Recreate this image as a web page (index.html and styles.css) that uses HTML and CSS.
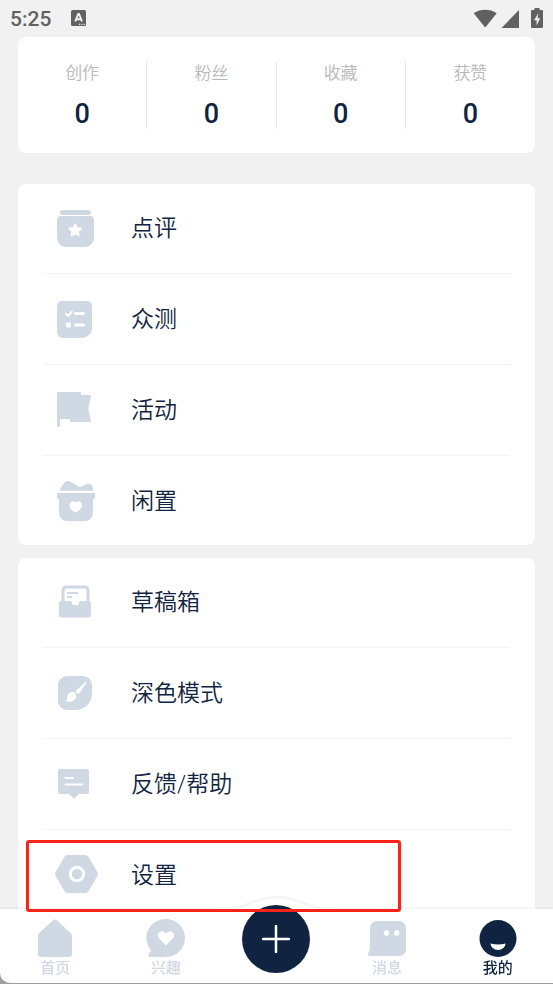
FILE: index.html
```html
<!DOCTYPE html>
<html lang="zh-CN">
<head>
<meta charset="utf-8">
<meta name="viewport" content="width=device-width, initial-scale=1">
<title>我的</title>
<link rel="stylesheet" href="styles.css">
</head>
<body>
<div class="app">
  <header class="status">
    <span class="time">5:25</span>
    <svg class="ime" width="16" height="17" viewBox="0 0 16 17" aria-hidden="true">
      <rect width="15" height="16" rx="1.5" fill="#616161"/>
      <path d="M4.200 11.500 7.200 4h.8l3 7.500M5.300 9.200h4.600" fill="none" stroke="#f1f1f1" stroke-width="1.900"/>
      <path d="M8 14.300h1.200M10.300 14.300h1.200M12.600 14.300h1.200" stroke="#f1f1f1" stroke-width="1.200"/>
    </svg>
    <svg class="signals" width="70" height="22" viewBox="0 0 70 22" fill="#616161" aria-hidden="true">
      <path d="M.7 5.200C7.500.600 16.900.600 23.700 5.200L12.700 19h-1z"/>
      <path d="M46 2V20H28.500z"/>
      <path d="M61.500 0h5v2H69a1 1 0 0 1 1 1v16a1 1 0 0 1-1 1H59a1 1 0 0 1-1-1V3a1 1 0 0 1 1-1h2.500z"/>
      <path d="M65.500 5 61 12.200h2.600V17.500L67.200 10.200h-2.700z" fill="#f1f1f1"/>
    </svg>
  </header>

  <main class="content">
    <section class="card stats">
      <a class="stat" href="#works"><span class="stat-label">创作</span><span class="stat-value">0</span></a>
      <a class="stat" href="#fans"><span class="stat-label">粉丝</span><span class="stat-value">0</span></a>
      <a class="stat" href="#saved"><span class="stat-label">收藏</span><span class="stat-value">0</span></a>
      <a class="stat" href="#likes"><span class="stat-label">获赞</span><span class="stat-value">0</span></a>
    </section>

    <ul class="card menu">
      <li><a href="#review">
        <svg class="icon" viewBox="0 0 47 47" aria-hidden="true">
          <rect x="8" y="5" width="31" height="5" rx="2.500"/>
          <path d="M9 11h29a4 4 0 0 1 4 4v18a9 9 0 0 1-9 9H14a9 9 0 0 1-9-9V15a4 4 0 0 1 4-4z"/>
          <path class="cut join" d="m23.200 19.400 1.700 3.700 4 .5-3 2.700.8 4-3.500-2-3.500 2 .8-4-3-2.700 4-.5z"/>
        </svg>点评</a></li>
      <li><a href="#trial">
        <svg class="icon" viewBox="0 0 47 47" aria-hidden="true">
          <path d="M10 5h25a5 5 0 0 1 5 5v22a10 10 0 0 1-10 10H11a6 6 0 0 1-6-6V10a5 5 0 0 1 5-5z"/>
          <path class="line" d="M23.500 17.500h8M23.500 29h8"/>
          <path class="line fine" d="m14 17.700 2.200 2.300 3.600-4.300"/>
          <circle class="cut" cx="16.500" cy="29" r="2.700"/>
        </svg>众测</a></li>
      <li><a href="#events">
        <svg class="icon" viewBox="0 0 47 47" aria-hidden="true">
          <path d="M6 5h22a1 1 0 0 1 1 1v2h9a1 1 0 0 1 1 1.300L36.600 20a6 6 0 0 0 0 3L39 34a.8.8 0 0 1-.8 1H19a1 1 0 0 1-1-1v-2H8v7a1 1 0 0 1-1 1H6a1 1 0 0 1-1-1V6a1 1 0 0 1 1-1z"/>
        </svg>活动</a></li>
      <li><a href="#idle">
        <svg class="icon" viewBox="0 0 47 47" aria-hidden="true">
          <path d="M7.500 12.700C9 9 11.500 5 13.500 3.700c2-1.200 4.500-.6 6.500.8l7.500 4.800 7.500-3c3-1.200 5 .2 5.500 2.400l.7 4z"/>
          <path d="M6 15h36a1 1 0 0 1 1 1v3.500a1.500 1.500 0 0 1-1.500 1.500H41v14a8 8 0 0 1-8 8H15a8 8 0 0 1-8-8V21h-.5A1.500 1.500 0 0 1 5 19.500V16a1 1 0 0 1 1-1z"/>
          <path class="cut" d="M23.700 34.500c-3-1.500-6.300-4-6.300-7.300 0-4.200 4.800-5 6.300-2.200 1.500-2.800 6.300-2 6.300 2.200 0 3.300-3.300 5.800-6.300 7.300z"/>
        </svg>闲置</a></li>
    </ul>

    <ul class="card menu">
      <li><a href="#drafts">
        <svg class="icon" viewBox="0 0 47 47" aria-hidden="true">
          <path class="edge" d="M11 24V11.500A3.500 3.500 0 0 1 14.500 8h18a3.500 3.500 0 0 1 3.500 3.500V24"/>
          <path class="edge thin" d="M15 14h11M15 18h5"/>
          <path d="M9 22h9a2 2 0 0 1 2 2v.5a1.500 1.500 0 0 0 1.500 1.500h4a1.500 1.500 0 0 0 1.500-1.500V24a2 2 0 0 1 2-2h8a2 2 0 0 1 2 2v12.500a2 2 0 0 1-2 2H9a2 2 0 0 1-2-2V24a2 2 0 0 1 2-2z"/>
        </svg>草稿箱</a></li>
      <li><a href="#dark">
        <svg class="icon" viewBox="0 0 47 47" aria-hidden="true">
          <path d="M15 6h16a9 9 0 0 1 9 9v8c0 10-7 17-17 17h-8a9 9 0 0 1-9-9V15a9 9 0 0 1 9-9z"/>
          <path class="cut" d="M33.300 12c.8-.5 1.500.2 1 1L27.500 23c-.6 1-1.300 1.200-2 .6l-1.300-1.200c-.7-.7-.6-1.300.2-2zM18.500 22.200c3-1 6 1.300 5.800 4.300-.3 4.200-5.800 6.500-11.300 4.600 2-.8 2.200-1.800 2.200-3.800 0-2.500 1.200-4.400 3.300-5.100z"/>
        </svg>深色模式</a></li>
      <li><a href="#help">
        <svg class="icon" viewBox="0 0 47 47" aria-hidden="true">
          <path d="M8 8h27a2 2 0 0 1 2 2v21a2 2 0 0 1-2 2h-8l-3.500 3.300a2 2 0 0 1-3 0L17 33H8a2 2 0 0 1-2-2V10a2 2 0 0 1 2-2z"/>
          <path class="line fine" d="M13.500 17H21M13.500 23.500H30"/>
        </svg>反馈/帮助</a></li>
      <li><a href="#settings">
        <svg class="icon" viewBox="0 0 47 47" aria-hidden="true">
          <path d="M15.500 3h18a3.500 3.500 0 0 1 3 1.700l9 15.500a3.500 3.500 0 0 1 0 3.600l-9 15.500a3.500 3.500 0 0 1-3 1.700h-18a3.500 3.500 0 0 1-3-1.700l-9-15.500a3.500 3.500 0 0 1 0-3.600l9-15.500a3.500 3.500 0 0 1 3-1.700z"/>
          <circle class="line" cx="25" cy="22" r="6.700"/>
        </svg>设置</a></li>
    </ul>
  </main>

  <nav class="tabs">
    <svg class="bump" width="120" height="18" viewBox="0 0 120 18" aria-hidden="true">
      <path d="M0 15.500h12C30 15.500 38 4 60 4s30 11.500 48 11.500h12V18H0z" fill="#fff"/>
      <path d="M0 14.500h12C30 14.500 38 3 60 3s30 11.500 48 11.500h12" fill="none" stroke="#f5f5f5" stroke-width="3"/>
    </svg>
    <a class="tab" href="#home">
      <svg width="40" height="40" viewBox="0 0 40 40" aria-hidden="true">
        <path d="M17.500 2.800a3.500 3.500 0 0 1 5 0L35.300 15a4 4 0 0 1 1.700 2.800V36a3 3 0 0 1-3 3H6a3 3 0 0 1-3-3V17.800A4 4 0 0 1 4.200 15z"/>
      </svg>首页</a>
    <a class="tab" href="#interest">
      <svg width="40" height="40" viewBox="0 0 40 40" aria-hidden="true">
        <path d="M20 1a19 19 0 0 1 0 38H4a1.800 1.800 0 0 1-1.500-2.800L5 32.500A19 19 0 0 1 20 1z"/>
        <path class="cut" d="M20 27.500 13.600 21c-2-2-2.300-4.700-.6-6.500 2-2.200 5.300-1.500 7 1.300 1.700-2.800 5-3.500 7-1.300 1.700 1.800 1.400 4.500-.6 6.500z"/>
      </svg>兴趣</a>
    <button class="add" type="button" aria-label="发布">
      <svg width="28" height="28" viewBox="0 0 28 28" aria-hidden="true"><path d="M14 1v26M1 14h26" stroke="#fff" stroke-width="2.500" stroke-linecap="round"/></svg>
    </button>
    <a class="tab" href="#messages">
      <svg width="40" height="40" viewBox="0 0 40 40" aria-hidden="true">
        <path d="M10 3h22a7 7 0 0 1 7 7v21a7 7 0 0 1-7 7H2.500A1.800 1.800 0 0 1 1 35.500C2.500 33 3 31 3 28V10a7 7 0 0 1 7-7z"/>
        <circle class="cut" cx="19.500" cy="15" r="2.700"/><circle class="cut" cx="29.700" cy="15" r="2.700"/>
      </svg>消息</a>
    <a class="tab active" href="#me">
      <svg width="40" height="40" viewBox="0 0 40 40" aria-hidden="true">
        <circle cx="20" cy="20.500" r="18.500"/>
        <path class="cut" d="M12.500 25.500q7.500 2 15 0a7.500 6.500 0 0 1-15 0z"/>
      </svg>我的</a>
    <div class="marker"></div>
  </nav>
</div>
</body>
</html>
```
FILE: styles.css
```css
* {
  box-sizing: border-box;
}

body {
  margin: 0;
  background: #a0a0a0;
  color: #102442;
  font-family: Roboto, "Noto Sans CJK SC", sans-serif;
}

a {
  color: inherit;
  text-decoration: none;
}

.app {
  display: flex;
  flex-direction: column;
  height: 100vh;
  padding-bottom: 1px;
}

.status {
  display: flex;
  align-items: center;
  height: 37px;
  padding: 0 10px;
  background: #f1f1f1;
  color: #616161;
}

.time {
  font-size: 21px;
  font-weight: 500;
  line-height: 24px;
  padding-top: 1px;
}

.ime {
  margin-left: 20px;
}

.signals {
  margin-left: auto;
}

.content {
  flex: 1;
  min-height: 0;
  overflow-y: auto;
  scrollbar-width: none;
  padding: 0 18px;
  background: #f1f1f1;
}

.card {
  margin: 0 0 13px;
  background: #fff;
  border-radius: 8px;
}

.stats {
  display: grid;
  grid-template-columns: repeat(4, 1fr);
  margin-bottom: 31px;
  padding: 25px 0 24px;
}

.stat {
  display: flex;
  flex-direction: column;
  align-items: center;
  gap: 14px;
  height: 67px;
}

.stat:not(:last-child) {
  border-right: 1px solid #e8e8e8;
}

.stat-label {
  color: #b8b8b8;
  font-size: 17px;
  font-weight: 350;
  line-height: 22px;
}

.stat-value {
  font-size: 27px;
  font-weight: 500;
  line-height: 32px;
}

.menu {
  padding: 0 25px;
  list-style: none;
}

.menu li {
  padding: 22px 0 21px;
  border-bottom: 1px solid #f3f3f3;
}

.menu li:first-child {
  padding-top: 21px;
}

.menu li:last-child {
  padding-bottom: 20px;
  border-bottom: 0;
}

.menu a {
  display: flex;
  align-items: center;
  gap: 32px;
  padding-left: 9px;
  font-size: 23px;
  font-weight: 350;
  line-height: 38px;
}

.icon {
  flex: none;
  width: 47px;
  height: 47px;
  fill: #d0d8e4;
}

svg .cut {
  fill: #fff;
}

.icon .join {
  stroke: #fff;
  stroke-width: 2;
  stroke-linejoin: round;
}

.icon .line {
  fill: none;
  stroke: #fff;
  stroke-width: 3;
  stroke-linecap: round;
  stroke-linejoin: round;
}

.icon .fine {
  stroke-width: 2;
}

.icon .edge {
  fill: none;
  stroke: #d0d8e4;
  stroke-width: 3;
}

.icon .thin {
  stroke-width: 2;
}

.tabs {
  position: relative;
  display: grid;
  grid-template-columns: repeat(5, 1fr);
  height: 74px;
  background: #fff;
  border-radius: 0 0 0 10px;
  box-shadow: 0 -1px 3px rgba(0, 0, 0, 0.07);
}

.bump {
  position: absolute;
  left: 50%;
  bottom: 100%;
  margin: 0 0 -3px -60px;
}

.tab {
  display: flex;
  flex-direction: column;
  align-items: center;
  padding-top: 9px;
  color: #d0d8e4;
  font-size: 15px;
  font-weight: 500;
  line-height: 20px;
}

.tab svg {
  fill: currentColor;
}

.active {
  color: #102442;
}

.add {
  position: relative;
  display: flex;
  align-items: center;
  justify-content: center;
  justify-self: center;
  width: 68px;
  height: 68px;
  margin-top: -4px;
  padding: 0;
  border: 0;
  border-radius: 50%;
  background: #102442;
}

.marker {
  position: absolute;
  top: -69px;
  left: 26px;
  width: 375px;
  height: 72px;
  border: 3px solid #fb2318;
  border-radius: 3px;
  pointer-events: none;
}
```
